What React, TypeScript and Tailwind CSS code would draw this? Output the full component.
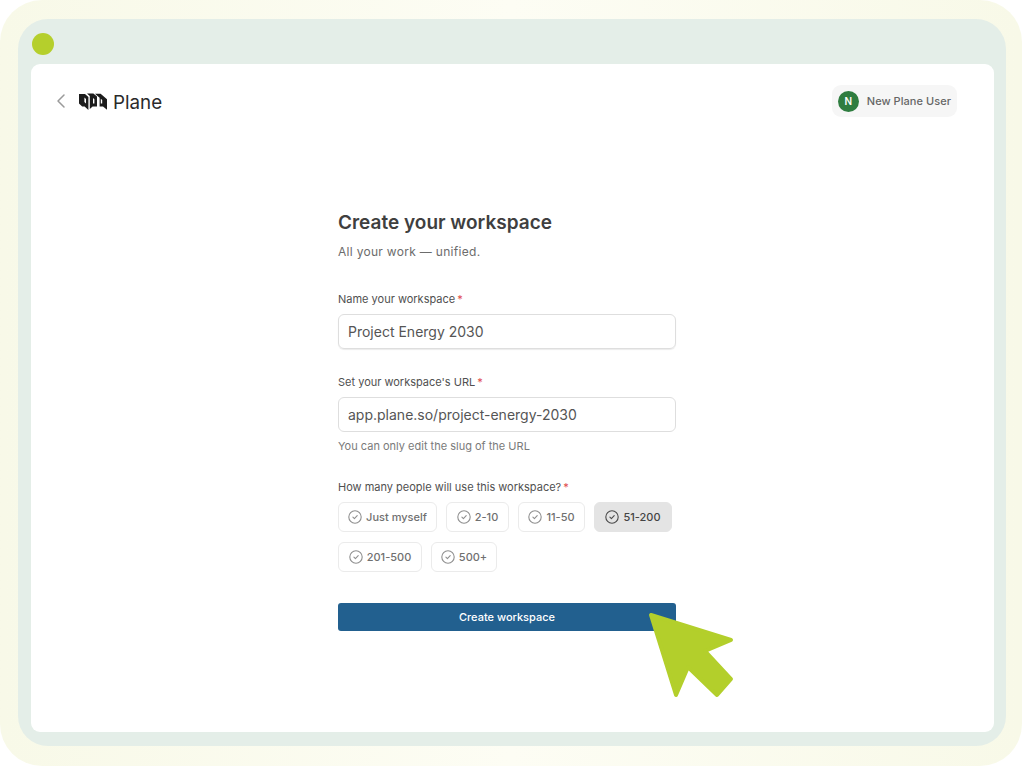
import React from 'react'
import { ChevronLeft } from 'lucide-react'

const sizes = [
  [['Just myself', 'w-[99px]'], ['2-10', 'w-[63px]'], ['11-50', 'w-[67px]'], ['51-200', 'w-[78px]']],
  [['201-500', 'w-[84px]'], ['500+', 'w-[66px]']],
]

function CheckCircle({ active }: { active: boolean }) {
  return (
    <svg width="14" height="14" viewBox="0 0 14 14" fill="none" stroke={active ? '#4a4a4a' : '#8f8f8f'} strokeWidth="1.1">
      <circle cx="7" cy="7" r="6.2" />
      <path d="M4.9 7.2l1.5 1.4 2.8-2.9" strokeLinecap="round" strokeLinejoin="round" />
    </svg>
  )
}

function Logo() {
  return (
    <svg width="28" height="17" viewBox="0 0 28 17" fill="#1c1c1c">
      <path d="M0 1h6l3.4 3v13l-3.8-3.6H3.2L0 10.4z" />
      <path d="M8 0.4h6.4l3.6 3.2v9.8h-4.4L10.8 16V3z" />
      <path d="M16 0.8h5.6L28 6.2v10.6l-4-3.4h-3.4V4.8z" />
      <path d="M5.4 4.6l1.6 1.4v4.6L5.4 9zM14 5l1.4 1.2v4.2H14zM21.8 5.8l1.4 1.2v3.4h-1.4z" fill="#fff" />
    </svg>
  )
}

function Label({ children }: { children: React.ReactNode }) {
  return (
    <label className="block text-[11px] leading-4 font-normal text-[#505050]">
      {children}
      <span className="ml-[2px] text-[#e0474c]">*</span>
    </label>
  )
}

export default function App() {
  return (
    <div className="relative h-[767px] w-[1024px] overflow-hidden bg-white font-['Inter',sans-serif]">
      <div className="h-[766px] w-[1022px] rounded-[42px] bg-linear-to-r from-[#f8f9e8] via-[#fdfdf4] to-[#f8f9e8] pt-[19px] pr-[16px] pb-[20px] pl-[18px]">
        <div className="flex h-full flex-col rounded-[30px] bg-[#e4eee8] pr-[12px] pb-[14px] pl-[13px]">
          <div className="flex h-[45px] shrink-0 items-center pt-[4px] pl-[1px]">
            <div className="size-[22px] rounded-full bg-[#b5cf2c]" />
          </div>

          <div className="flex-1 rounded-[9px] bg-white">
            <div className="flex items-center justify-between pt-[21px] pr-[37px] pl-[18px]">
              <div className="flex items-center">
                <ChevronLeft className="size-[24px] text-[#9a9a9a]" strokeWidth={1.5} />
                <div className="ml-[6px] flex items-center gap-[6px]">
                  <Logo />
                  <span className="mt-[3px] text-[18.8px] leading-6 font-normal text-[#2a2a2a]">Plane</span>
                </div>
              </div>
              <div className="flex h-[32px] items-center gap-[8px] rounded-[9px] bg-[#f6f6f6] px-[6px]">
                <div className="flex size-[21px] items-center justify-center rounded-full bg-[#2f7d40] text-[10px] font-semibold text-white">
                  N
                </div>
                <span className="text-[11px] tracking-[0.05px] font-medium text-[#666666]">New Plane User</span>
              </div>
            </div>

            <div className="mt-[92px] ml-[307px] w-[338px]">
              <h1 className="text-[19px] leading-7 font-semibold text-[#3f3f3f]">Create your workspace</h1>
              <p className="mt-[5px] text-xs leading-5 tracking-[0.3px] text-[#6c6c6c]">All your work — unified.</p>

              <div className="mt-[29px]">
                <Label>Name your workspace</Label>
                <div className="mt-[7px] flex h-[35px] items-center rounded-[6px] border border-[#dedede] px-[9px] text-[14px] text-[#555555] shadow-[0_1px_1px_rgba(0,0,0,0.08)]">
                  Project Energy 2030
                </div>
              </div>

              <div className="mt-[25px]">
                <Label>Set your workspace's URL</Label>
                <div className="mt-[7px] flex h-[35px] items-center rounded-[6px] border border-[#dedede] px-[9px] text-[14px] text-[#555555]">
                  app.plane.so/project-energy-2030
                </div>
                <p className="mt-[6px] text-[11px] leading-4 text-[#7a7a7a]">You can only edit the slug of the URL</p>
              </div>

              <div className="mt-[25px]">
                <Label>How many people will use this workspace?</Label>
                <div className="mt-[7px] flex flex-col gap-[10px]">
                  {sizes.map((row, i) => (
                    <div key={i} className="flex gap-[9px]">
                      {row.map(([s, w]) => {
                        const active = s === '51-200'
                        return (
                          <div
                            key={s}
                            className={`flex h-[30px] items-center justify-center gap-[4px] rounded-[6px] border text-[11px] font-medium whitespace-nowrap ${w} ${
                              active ? 'border-[#e4e4e4] bg-[#e4e4e4] text-[#444444]' : 'border-[#ebebeb] bg-white text-[#707070]'
                            }`}
                          >
                            <CheckCircle active={active} />
                            {s}
                          </div>
                        )
                      })}
                    </div>
                  ))}
                </div>
              </div>

              <button className="mt-[31px] flex h-[28px] w-full items-center justify-center rounded-[3px] bg-[#22608f] text-[11px] font-medium text-white">
                Create workspace
              </button>
            </div>
          </div>
        </div>
      </div>

      {/* cursor sits on top of the button */}
      <svg className="absolute top-[610px] left-[646px]" width="92" height="90" viewBox="646 610 92 90" fill="#b3cf2b" stroke="#b3cf2b" strokeWidth="4" strokeLinejoin="round">
        <path d="M651 615L731 640L705 651L731 679L717 695L688 667L676 695Z" />
      </svg>
    </div>
  )
}
